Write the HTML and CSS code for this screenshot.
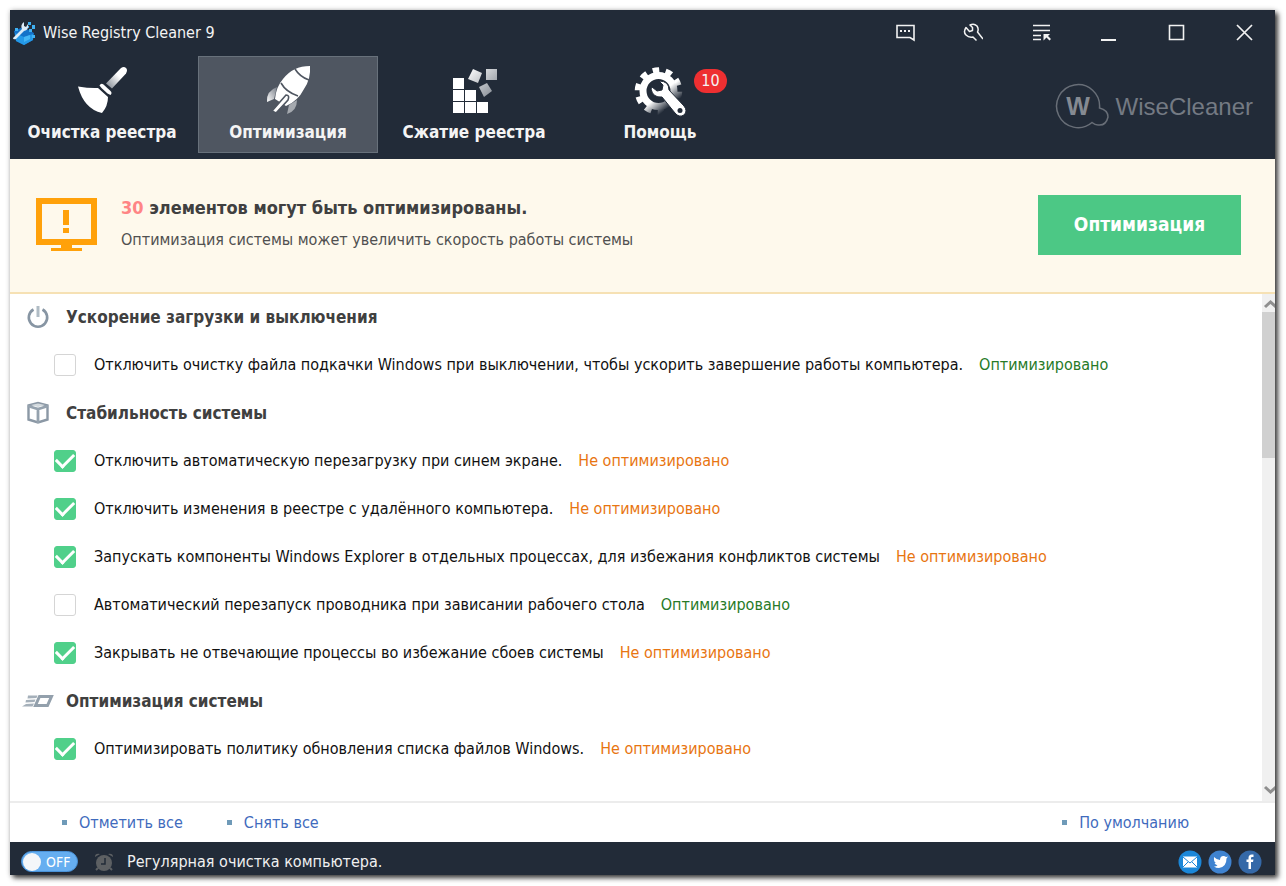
FILE: index.html
```html
<!DOCTYPE html>
<html lang="ru">
<head>
<meta charset="utf-8">
<title>Wise Registry Cleaner 9</title>
<link rel="stylesheet" href="styles.css">
</head>
<body>
<div class="window">
  <header class="header">
    <div class="titlebar">
      <svg class="app-icon" viewBox="0 0 24 24" aria-hidden="true">
        <path d="M2 10l9-4 11 6-1 7-9 5-8-4z" fill="#1472c9"/>
        <path d="M3 12l9 4 9-3v6l-9 5-8-4z" fill="#2499e8"/>
        <path d="M12 16l6-2v4l-6 3z" fill="#45b6f5"/>
        <path d="M16 1h3v3h-3zM20 4h3v4h-3zM17 8h3v3h-3zM3 7h3v3H3zM20 14h3v3h-3zM15 5h2v2h-2z" fill="#3fb0f2"/>
        <path d="M1 17L10 8Q8 4 12 1v4l2 1 2-3q1 6-4 7l-8 8q-3 1-3-1z" fill="#dcecf8"/>
      </svg>
      <h1 class="title">Wise Registry Cleaner 9</h1>
      <div class="controls">
        <button class="control" aria-label="Отзыв"><svg viewBox="0 0 20 20"><path d="M2 2.500h17v14.500l-4-2.500H2z" fill="none" stroke="#f2f2f2" stroke-width="1.600"/><path d="M5 7h2v2H5zM9 7h2v2H9zM13 7h2v2h-2z" fill="#f2f2f2"/></svg></button>
        <button class="control" aria-label="Настройки"><svg viewBox="0 0 20 20"><path d="M13.500 17.500L10 14Q6 15 3 12Q0 9 3 4.500L6.500 8.500L9.500 7.500L9.500 4.500L7 2Q11 0 14 3Q16 6 14.500 9L20 16" fill="none" stroke="#f2f2f2" stroke-width="1.500" stroke-linejoin="round"/></svg></button>
        <button class="control" aria-label="Меню"><svg viewBox="0 0 20 20"><path d="M2 2.500h17M2 7.500h17M2 12.500h8M2 16.500h8" stroke="#f2f2f2" stroke-width="1.600"/><path d="M12.500 11H19l-2 2 3 3-1.500 1.500-3-3-3 3z" fill="#f2f2f2"/></svg></button>
        <button class="control" aria-label="Свернуть"><svg viewBox="0 0 20 20"><path d="M2 17h15" stroke="#f2f2f2" stroke-width="2"/></svg></button>
        <button class="control" aria-label="Развернуть"><svg viewBox="0 0 20 20"><path d="M2.500 2.500h14v14h-14z" fill="none" stroke="#f2f2f2" stroke-width="1.600"/></svg></button>
        <button class="control" aria-label="Закрыть"><svg viewBox="0 0 20 20"><path d="M2 2l15 15M17 2L2 17" stroke="#f2f2f2" stroke-width="1.700"/></svg></button>
      </div>
    </div>
    <div class="toolbar">
      <nav class="tabs">
        <button class="tab">
          <svg class="tab-icon" viewBox="0 0 52 52" aria-hidden="true">
            <defs><linearGradient id="handle" x1="1" y1="0" x2="0" y2="1"><stop offset=".4" stop-color="#fff"/><stop offset="1" stop-color="#777e88"/></linearGradient></defs>
            <path d="M30 18.500L45 3q3-2 5 0t0 5.500L36 23.500z" fill="url(#handle)"/>
            <path d="M23.500 20.500q1.500-3 4-1l7 6.500q2 2 0 4l-3-1.500-6-5.500z" fill="#fff"/>
            <path d="M2 21.500q12 2 20 1.500l10 9q0 9-6 16Q8 44 2 21.500z" fill="#fff"/>
          </svg>
          <span>Очистка реестра</span>
        </button>
        <button class="tab tab-active">
          <svg class="tab-icon" viewBox="0 0 52 52" aria-hidden="true">
            <defs><linearGradient id="fin" x1="0" y1="1" x2="1" y2="0"><stop offset="0" stop-color="#fff"/><stop offset="1" stop-color="#777d87"/></linearGradient></defs>
            <path d="M15 22Q4 26 5 37l7-3z" fill="url(#fin)"/>
            <path d="M35 35q0 11-10 14l2-9z" fill="#a5a9af"/>
            <path d="M48 1q1 13-6 23-6 12-18 17l-11-7Q14 22 21 14 31 1 48 1z" fill="#fff"/>
            <path d="M33 4q5 8 14 11M19 18q5 9 17 13" fill="none" stroke="#4f5661" stroke-width="1.600"/>
            <path d="M24 30q4 0 2 5L14 48l-4-2z" fill="#fff" stroke="#4f5661" stroke-width="1.600"/>
          </svg>
          <span>Оптимизация</span>
        </button>
        <button class="tab">
          <svg class="tab-icon" viewBox="0 0 52 52" aria-hidden="true">
            <defs><linearGradient id="cube" x1="0" y1="0" x2="1" y2="1"><stop offset="0" stop-color="#fff"/><stop offset="1" stop-color="#7b828b"/></linearGradient></defs>
            <path d="M5 13h11v11H5zM5 25h11v11H5zM5 37h11v11H5zM17 25h11v11H17zM17 37h11v11H17zM29 37h11v11H29z" fill="#fff"/>
            <path d="M25 4l9 4-4 10-10-4zM31 22l8-4 5 8-8 6zM38 4h11v11H38z" fill="url(#cube)"/>
          </svg>
          <span>Сжатие реестра</span>
        </button>
        <button class="tab">
          <svg class="tab-icon" viewBox="0 0 52 52" aria-hidden="true">
            <defs><linearGradient id="gear" gradientUnits="userSpaceOnUse" x1="29" y1="27" x2="39" y2="39"><stop offset="0" stop-color="#fff"/><stop offset="1" stop-color="#222b38"/></linearGradient></defs>
            <circle cx="24.500" cy="26" r="15.500" fill="none" stroke="url(#gear)" stroke-width="7"/>
            <circle cx="24.500" cy="26" r="21" fill="none" stroke="url(#gear)" stroke-width="5.500" pathLength="100" stroke-dasharray="5 5" transform="rotate(2 24.500 26)"/>
            <path d="M25 16q10 0 10 9l15 16q4 5 0 9-5 3-9-2L28 32q-9 1-11-8l1-2 5 4 5-1 1-5z" fill="#fff" stroke="#222b38" stroke-width="1"/>
            <circle cx="46" cy="45.500" r="2.500" fill="#222b38"/>
          </svg>
          <span>Помощь</span>
          <span class="badge">10</span>
        </button>
      </nav>
      <div class="brand">
        <svg class="brand-mark" viewBox="0 0 54 48" role="img" aria-label="W">
          <path d="M37 39.500A21.500 21.500 0 1 1 44.500 25Q53 27 53 34q-2 9-10 8-3 0-6-2.500z" fill="none" stroke="#686e77" stroke-width="1.500"/>
          <text x="23" y="32" text-anchor="middle" class="brand-letter">W</text>
        </svg>
        <span>WiseCleaner</span>
      </div>
    </div>
  </header>

  <section class="banner">
    <svg class="monitor" viewBox="0 0 62 54" aria-hidden="true">
      <path d="M0 0h61v47H0zM6 6v35h49V6z" fill="#ffa10a" fill-rule="evenodd"/>
      <path d="M27 12h6v15h-6zM27 30h6v5h-6zM25 47h11v3h10v3H15v-3h10z" fill="#ffa10a"/>
    </svg>
    <div class="banner-text">
      <h2 class="banner-title"><span class="count">30</span> элементов могут быть оптимизированы.</h2>
      <p class="banner-note">Оптимизация системы может увеличить скорость работы системы</p>
    </div>
    <button class="optimize">Оптимизация</button>
  </section>

  <main class="content">
    <div class="list">
      <h3 class="group">
        <svg class="group-icon" viewBox="0 0 30 24" aria-hidden="true"><path d="M10.500 4.500a9.200 9.200 0 1 0 9 0" fill="none" stroke="#8795a3" stroke-width="2.600"/><path d="M15 1v11" stroke="#b0bcc5" stroke-width="3"/></svg>
        Ускорение загрузки и выключения</h3>
      <div class="option"><input type="checkbox" id="o1"><label for="o1">Отключить очистку файла подкачки Windows при выключении, чтобы ускорить завершение работы компьютера.</label><span class="done">Оптимизировано</span></div>
      <h3 class="group">
        <svg class="group-icon" viewBox="0 0 30 24" aria-hidden="true"><path d="M5.500 4.500l9.500-2.500 9.500 2.500v14L15 21.500 5.500 18.500z" fill="none" stroke="#8b98a5" stroke-width="2.400"/><path d="M5 5l10 3 10-3M15 8v14" fill="none" stroke="#95a2ae" stroke-width="2.800"/><path d="M8 4l7-1.500L22 4l-7 2z" fill="#d3dade"/></svg>
        Стабильность системы</h3>
      <div class="option"><input type="checkbox" id="o2" checked><label for="o2">Отключить автоматическую перезагрузку при синем экране.</label><span class="todo">Не оптимизировано</span></div>
      <div class="option"><input type="checkbox" id="o3" checked><label for="o3">Отключить изменения в реестре с удалённого компьютера.</label><span class="todo">Не оптимизировано</span></div>
      <div class="option"><input type="checkbox" id="o4" checked><label for="o4">Запускать компоненты Windows Explorer в отдельных процессах, для избежания конфликтов системы</label><span class="todo">Не оптимизировано</span></div>
      <div class="option"><input type="checkbox" id="o5"><label for="o5">Автоматический перезапуск проводника при зависании рабочего стола</label><span class="done">Оптимизировано</span></div>
      <div class="option"><input type="checkbox" id="o6" checked><label for="o6">Закрывать не отвечающие процессы во избежание сбоев системы</label><span class="todo">Не оптимизировано</span></div>
      <h3 class="group">
        <svg class="group-icon" viewBox="0 0 30 24" aria-hidden="true"><path d="M16.500 7.500h12l-4 9H12.500z" fill="none" stroke="#93a0ac" stroke-width="3"/><path d="M5 6.500h9.500l-1 2.500-9 .5zM3 11l9.500-.5-1 2.500-9 .500zM-1 17.500l4-2.500 8-.5-1.500 3z" fill="#a5b0ba"/></svg>
        Оптимизация системы</h3>
      <div class="option"><input type="checkbox" id="o7" checked><label for="o7">Оптимизировать политику обновления списка файлов Windows.</label><span class="todo">Не оптимизировано</span></div>
    </div>
    <div class="scrollbar">
      <button class="scroll-button" aria-label="Вверх"><svg viewBox="0 0 18 18"><path d="M3 13l5.500-5 5.500 5" fill="none" stroke="#8f8f8f" stroke-width="3"/></svg></button>
      <div class="track"><div class="thumb"></div></div>
      <button class="scroll-button" aria-label="Вниз"><svg viewBox="0 0 18 18"><path d="M3 4l5.500 5 5.500-5" fill="none" stroke="#8f8f8f" stroke-width="3"/></svg></button>
    </div>
  </main>

  <div class="links">
    <a class="link" href="#all">Отметить все</a>
    <a class="link" href="#none">Снять все</a>
    <a class="link link-default" href="#default">По умолчанию</a>
  </div>

  <footer class="footer">
    <button class="switch" role="switch" aria-checked="false" aria-label="Регулярная очистка"><span class="knob"></span>OFF</button>
    <svg class="alarm" viewBox="0 0 20 20" aria-hidden="true"><path d="M1 5q0-4 5-3zM19 5q0-4-5-3z" fill="#5d6063"/><path d="M4 16l-2 2M16 16l2 2" stroke="#5d6063" stroke-width="2"/><circle cx="10" cy="11" r="8" fill="#5d6063"/><path d="M11 6v6H7" fill="none" stroke="#222b38" stroke-width="1.500"/></svg>
    <span class="schedule">Регулярная очистка компьютера.</span>
    <div class="social">
      <a href="#mail" aria-label="Почта"><svg viewBox="0 0 24 24"><circle cx="12" cy="12" r="11.500" fill="#1b87d8"/><path d="M5 6.500h14v11H5z" fill="#fff"/><path d="M5 7l7 6 7-6M5 17l5-5M19 17l-5-5" fill="none" stroke="#1b87d8"/></svg></a>
      <a href="#twitter" aria-label="Twitter"><svg viewBox="0 0 24 24"><circle cx="12" cy="12" r="11.500" fill="#3f83d0"/><path d="M6 7q3 3 6 3 0-4 3.500-4 1.500 0 2.500 1l2-.5-1.500 2Q18.500 17 11 18q-3 0-5-1.500 2.500 0 3.500-1.300-2-.2-3-2.200h1.500Q5.500 12 6 7z" fill="#fff"/></svg></a>
      <a href="#facebook" aria-label="Facebook"><svg viewBox="0 0 24 24"><circle cx="12" cy="12" r="11.500" fill="#3569a8"/><path d="M10.500 19v-7H8.500V9.500h2V8q0-3.500 3.300-3.500H15.500V7H14q-1 0-1 1.200v1.300h2.500L15 12h-2v7z" fill="#fff"/></svg></a>
    </div>
  </footer>
</div>
</body>
</html>
```
FILE: styles.css
```css
* { box-sizing: border-box; }

body {
  margin: 0;
  min-height: 100vh;
  padding: 10px 11px 11px 10px;
  display: flex;
  background: #fff;
  color: #111;
  font: 16px/20px "DejaVu Sans Condensed", "Noto Sans", sans-serif;
}

button {
  margin: 0;
  padding: 0;
  border: 0;
  background: none;
  color: inherit;
  font: inherit;
}

svg { display: block; flex: none; }

.window {
  flex: 1;
  min-width: 0;
  display: flex;
  flex-direction: column;
  background: #fff;
  box-shadow: 3px 3px 5px rgba(0, 0, 0, .75), 0 0 5px rgba(0, 0, 0, .2);
}

.header {
  background: #222b38;
  color: #f4f4f4;
  padding-bottom: 6px;
}

.titlebar {
  display: flex;
  align-items: center;
  height: 46px;
  padding: 0 8px 0 2px;
}

.app-icon { width: 24px; height: 24px; }

.title {
  flex: 1;
  margin: 0 0 0 7px;
  font-size: 16px;
  font-weight: 400;
}

.controls { display: flex; gap: 24px; }

.control { width: 44px; height: 32px; display: grid; place-items: center; }
.control svg { width: 20px; height: 20px; }

.toolbar { display: flex; justify-content: space-between; }

.tabs { display: flex; gap: 6px; padding-left: 2px; }

.tab {
  position: relative;
  display: flex;
  flex-direction: column;
  align-items: center;
  width: 180px;
  height: 97px;
  padding-top: 8px;
  border: 1px solid transparent;
  font-size: 17px;
  font-weight: 700;
}

.tab-active { background: #4f5661; border-color: #68717b; }

.tab-icon { width: 52px; height: 52px; margin-bottom: 5px; }

.badge {
  position: absolute;
  top: 12px;
  right: 22px;
  width: 33px;
  height: 24px;
  border-radius: 12px;
  background: #ee2f31;
  font-size: 16px;
  font-weight: 400;
  line-height: 24px;
}

.brand {
  display: flex;
  align-items: center;
  gap: 7px;
  padding: 5px 22px 0 0;
  color: #747a83;
  font: 24px/32px "Liberation Sans", sans-serif;
}

.brand-mark { width: 54px; height: 48px; }
.brand-letter { font: 700 25px "Liberation Sans", sans-serif; fill: #858a92; }

.banner {
  display: flex;
  align-items: center;
  height: 135px;
  padding: 0 34px 2px 26px;
  background: #fef9ec;
  border-bottom: 2px solid #f6e1b4;
}

.monitor { width: 62px; height: 54px; }

.banner-text { flex: 1; margin-left: 23px; padding-bottom: 3px; }

.banner-title {
  margin: 0 0 10px;
  color: #404040;
  font-size: 18px;
  line-height: 24px;
}

.count { color: #ff8585; }

.banner-note { margin: 0; color: #505050; }

.optimize {
  width: 203px;
  height: 60px;
  padding-bottom: 2px;
  background: #4cc885;
  color: #fff;
  font-size: 19px;
  font-weight: 700;
}

.content { flex: 1; display: flex; min-height: 0; margin-top: -1px; }

.list { flex: 1; min-width: 0; }

.group {
  display: flex;
  align-items: center;
  gap: 13px;
  height: 48px;
  margin: 0;
  padding-left: 13px;
  color: #404040;
  font-size: 17px;
}

.group-icon { width: 30px; height: 24px; overflow: visible; }

.option {
  display: flex;
  align-items: center;
  height: 48px;
  padding-left: 44px;
  white-space: nowrap;
}

.option input {
  appearance: none;
  display: grid;
  place-items: center;
  width: 22px;
  height: 22px;
  margin: 0 18px 0 0;
  border: 1px solid #d5d5d5;
  border-radius: 3px;
  background: #fff;
}

.option input:checked { border-color: #50d08a; background: #50d08a; }

.option input:checked::before {
  content: "";
  width: 15px;
  height: 8px;
  margin-bottom: 5px;
  border: solid #fff;
  border-width: 0 0 3px 3px;
  transform: rotate(-45deg);
}

.done, .todo { margin-left: 16px; }
.done { color: #277a27; }
.todo { color: #e87511; }

.scrollbar {
  display: flex;
  flex-direction: column;
  width: 13px;
  margin-top: 1px;
  overflow: hidden;
  background: #f0f0f0;
}

.scroll-button { width: 18px; height: 18px; }
.scroll-button svg { width: 18px; height: 18px; }

.track { flex: 1; }
.thumb { height: 31%; background: #d0d0d0; }

.links {
  display: flex;
  align-items: center;
  gap: 44px;
  height: 41px;
  padding: 0 86px 0 52px;
  border-top: 2px solid #ececec;
}

.link {
  display: flex;
  align-items: center;
  gap: 12px;
  color: #3f6bbd;
  text-decoration: none;
}

.link::before { content: ""; width: 5px; height: 5px; background: #6f9ab8; }

.link-default { margin-left: auto; }

.footer {
  display: flex;
  align-items: center;
  height: 33px;
  padding: 6px 13px 0 11px;
  background: #222b38;
  color: #f0f0f0;
}

.switch {
  display: flex;
  align-items: center;
  gap: 5px;
  width: 57px;
  height: 21px;
  padding-left: 1px;
  border: 1px solid #4a93da;
  border-radius: 11px;
  background: #66aef0;
  color: #fff;
  font-size: 14px;
}

.knob { width: 18px; height: 18px; border-radius: 50%; background: #f4f6f9; }

.alarm { width: 20px; height: 20px; margin: 0 13px 0 16px; }

.social { display: flex; gap: 6px; margin-left: auto; }
.social svg { width: 24px; height: 24px; }
```
